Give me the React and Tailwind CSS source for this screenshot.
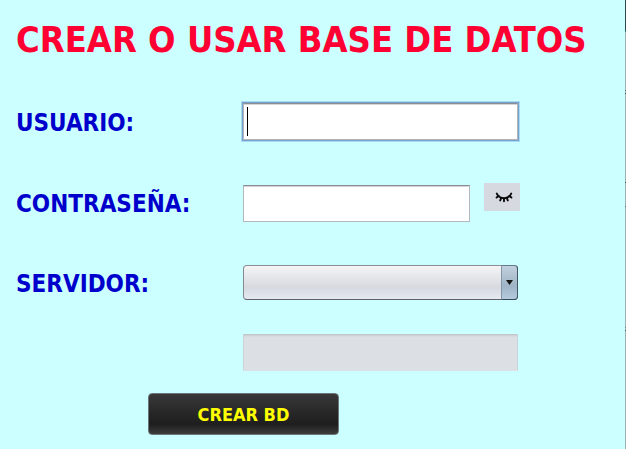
import React from "react";

const labelClass = "pt-0.5 text-2xl leading-8 font-bold text-[#0000cc]";

function ClosedEye() {
  return (
    <svg
      width="18"
      height="12"
      viewBox="0 0 18 12"
      fill="none"
      stroke="#0b0b0d"
      strokeWidth="1.9"
      strokeLinecap="round"
      aria-hidden="true"
    >
      <path d="M1.8 2.6C3 5.2 5.8 7.2 9 7.2s6-2 7.2-4.6" />
      <path d="M3.6 5 1.6 6.6M6.3 6.8 5.2 9.4M9 7.4v2.8M11.7 6.8l1.1 2.6M14.4 5l2 1.6" />
    </svg>
  );
}

function WindowEdge() {
  return (
    <div className="flex w-px shrink-0 flex-col bg-[#9bb0b4]" aria-hidden="true">
      <div className="h-[31px] bg-[#2c4a52]" />
      <div className="h-px bg-[#2c8a9a]" />
      <div className="mt-[58px] h-px bg-[#6f8286]" />
      <div className="mt-0.5 h-px bg-[#3f5357]" />
      <div className="mt-[88px] h-px bg-[#3f5357]" />
      <div className="mt-[23px] h-px bg-[#5f7378]" />
      <div className="mt-[120px] h-px bg-[#6f8286]" />
      <div className="mt-0.5 h-px bg-[#4f6367]" />
    </div>
  );
}

export default function App() {
  return (
    <div className="flex min-h-screen bg-[#ccffff] font-['DejaVu_Sans_Condensed','DejaVu_Sans',sans-serif]">
      <main className="min-w-0 flex-1 pt-4 pl-4">
        <h1 className="text-4xl leading-[48px] font-bold whitespace-nowrap text-[#ff0033]">
          CREAR O USAR BASE DE DATOS
        </h1>

        <form onSubmit={(e) => e.preventDefault()}>
          <div className="mt-[39px] grid grid-cols-[227px_minmax(0,275px)] items-center gap-y-[43px]">
            <label htmlFor="usuario" className={labelClass}>
              USUARIO:
            </label>
            <div className="relative">
              <input
                id="usuario"
                type="text"
                className="block h-[37px] w-full border border-t-[#8b8d93] border-r-[#b4b4b8] border-b-[#b4b4b8] border-l-[#b4b4b8] bg-white px-1 text-lg shadow-[inset_0_1px_0_#d4d4d8,0_0_0_1px_#73a4d1,0_0_0_2px_#a9d9ee] outline-none"
              />
              <span className="pointer-events-none absolute top-1 left-1 h-[29px] w-px bg-black" />
            </div>

            <label htmlFor="clave" className={labelClass}>
              CONTRASEÑA:
            </label>
            <div className="-mr-0.5 flex items-start justify-between">
              <input
                id="clave"
                type="password"
                className="mt-0.5 block h-[37px] w-[227px] border border-t-[#8b8d93] border-r-[#b4b8bc] border-b-[#b4b8bc] border-l-[#b4b8bc] bg-white px-1 text-lg shadow-[inset_0_1px_0_#d4d4d8] outline-none"
              />
              <button
                type="button"
                aria-label="Mostrar contraseña"
                className="flex h-7 w-9 items-center justify-center bg-[#d6d9df] pl-1"
              >
                <ClosedEye />
              </button>
            </div>

            <label htmlFor="servidor" className={labelClass}>
              SERVIDOR:
            </label>
            <div className="relative">
              <select
                id="servidor"
                className="block h-[35px] w-full appearance-none rounded border border-t-[#8c9096] border-r-[#52667a] border-b-[#5c626c] border-l-[#85898f] bg-linear-to-b from-[#f5f5f7] via-[#d6d9df] via-65% to-[#e6e9f1] pr-5 pl-2 text-lg outline-none"
              />
              <span className="pointer-events-none absolute inset-y-0 right-0 flex w-[17px] items-center justify-center rounded-r border border-t-[#68788a] border-r-[#43566a] border-b-[#34485c] border-l-[#8297aa] bg-linear-to-b from-[#c2d0dc] via-[#9fb4c6] via-60% to-[#b5cadc]">
                <svg width="7" height="5" viewBox="0 0 7 5" aria-hidden="true">
                  <path d="M0 0h7L3.5 5z" fill="#141414" />
                </svg>
              </span>
            </div>
          </div>

          <div className="mt-[34px] grid grid-cols-[227px_minmax(0,275px)]">
            <input
              type="text"
              disabled
              aria-label="Servidor personalizado"
              className="col-start-2 block h-[37px] w-full border border-t-[#c2c5ca] border-r-[#cdd2d6] border-b-[#dcdfe4] border-l-[#cdd2d6] bg-[#dce0e5] shadow-[inset_0_1px_0_#cfd2d7,inset_0_2px_0_#d7dade]"
            />
          </div>

          <button
            type="submit"
            className="mt-[22px] ml-[132px] block h-[42px] w-[191px] rounded border border-[#6c7678] bg-linear-to-b from-[#383838] via-[#1e1e1e] via-75% to-[#3c3c3c] pt-0.5 text-lg font-bold text-[#ffff00]"
          >
            CREAR BD
          </button>
        </form>
      </main>
      <WindowEdge />
    </div>
  );
}
